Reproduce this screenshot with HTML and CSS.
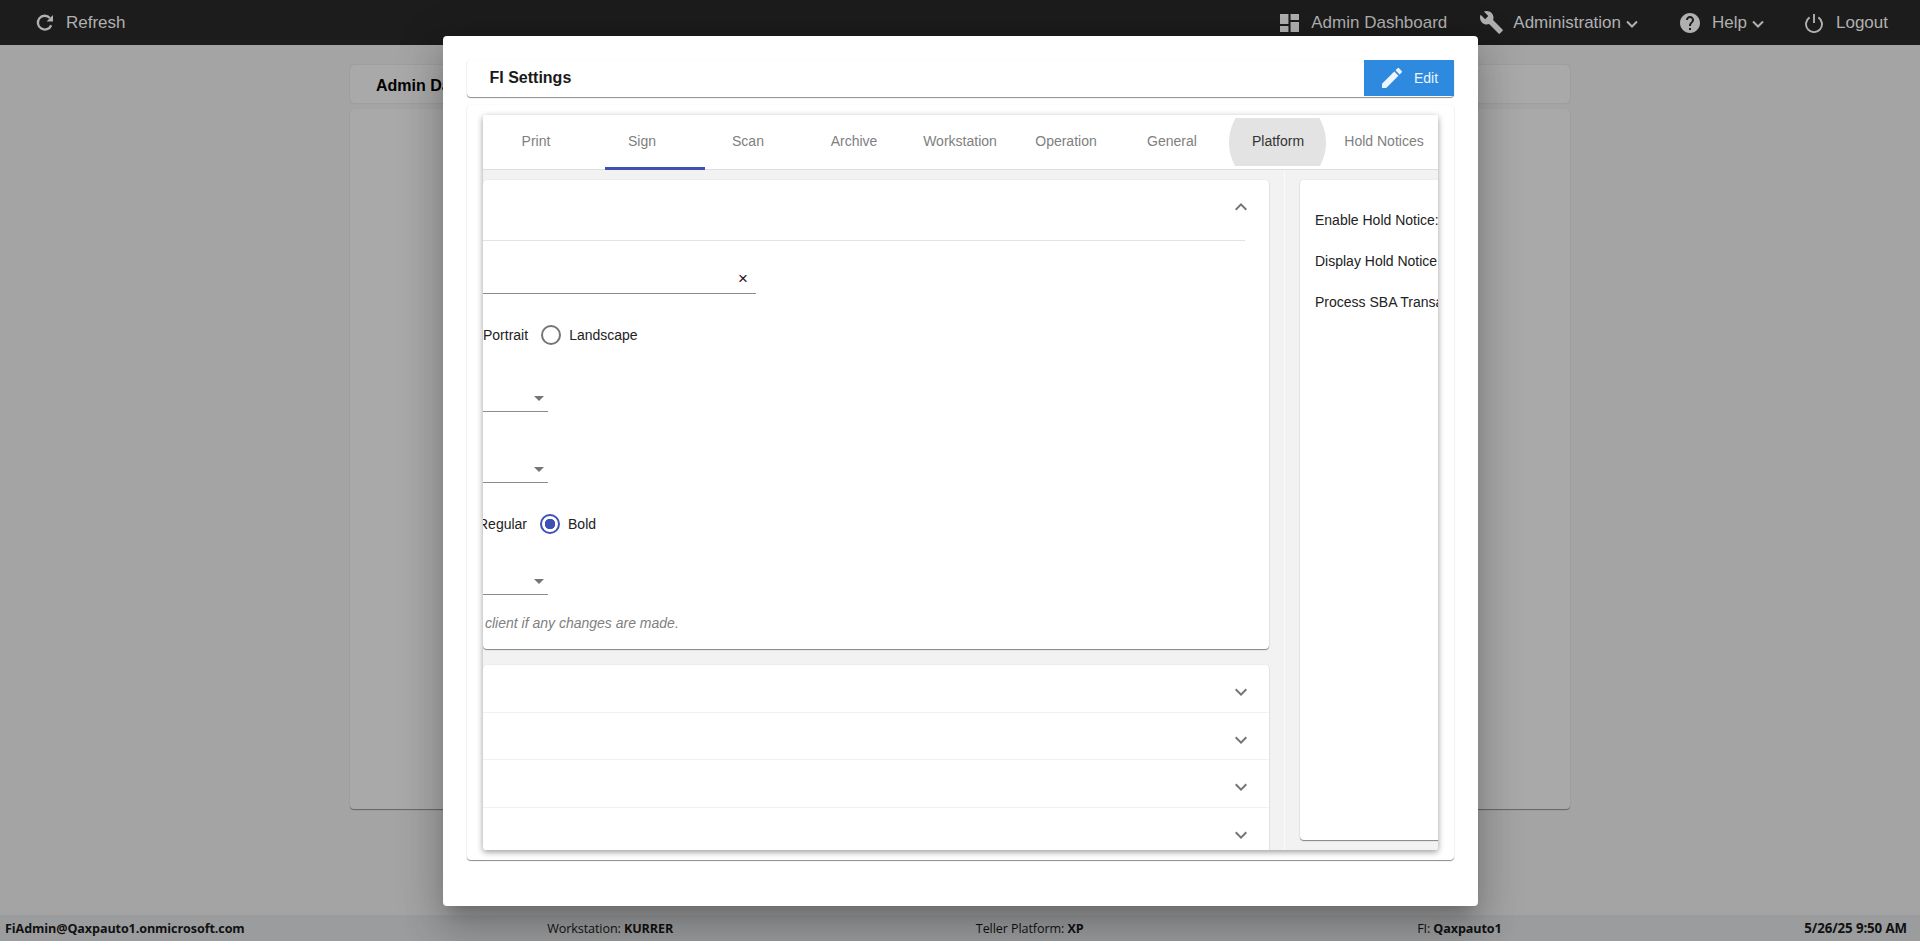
FILE: index.html
```html
<!DOCTYPE html>
<html lang="en">
<head>
    <meta charset="UTF-8">
    <meta name="viewport" content="width=device-width, initial-scale=1.0">
    <title>FI Settings</title>
    <link rel="stylesheet" href="styles.css">
</head>
<body>
    <div class="page">
        <header class="topbar">
            <a class="topbar__item topbar__item--refresh">
                <svg class="icon-refresh" viewBox="0 0 18 18"><path d="M15.2 11.2A6.9 6.9 0 1 1 13.9 4" fill="none" stroke="currentColor" stroke-width="2.3"/><path d="M17 1v6.4h-6.4z" fill="currentColor"/></svg>
                Refresh
            </a>
            <nav class="topbar__nav">
                <a class="topbar__item topbar__item--dash">
                    <svg class="icon-dash" viewBox="3 3 18 18" preserveAspectRatio="none"><path d="M3 13h8V3H3v10zm0 8h8v-6H3v6zm10 0h8V11h-8v10zm0-18v6h8V3h-8z" fill="currentColor"/></svg>
                    Admin Dashboard
                </a>
                <a class="topbar__item topbar__item--admin">
                    <svg class="icon-wrench" viewBox="1 1.2 22.2 22" ><path d="M22.7 19l-9.1-9.1c.9-2.3.4-5-1.5-6.9-2-2-5-2.4-7.4-1.3L9 6 6 9 1.6 4.7C.4 7.1.9 10.1 2.9 12.1c1.9 1.9 4.6 2.4 6.9 1.5l9.1 9.1c.4.4 1 .4 1.4 0l2.3-2.3c.5-.4.5-1.1.1-1.4z" fill="currentColor"/></svg>
                    Administration
                    <svg class="icon-caret" viewBox="0 0 12 8"><path d="M1 1.5l5 5 5-5" fill="none" stroke="currentColor" stroke-width="2"/></svg>
                </a>
                <a class="topbar__item topbar__item--help">
                    <svg class="icon-help" viewBox="2 2 20 20"><path d="M12 2C6.48 2 2 6.48 2 12s4.48 10 10 10 10-4.48 10-10S17.52 2 12 2zm1 17h-2v-2h2v2zm2.07-7.75l-.9.92C13.45 12.9 13 13.5 13 15h-2v-.5c0-1.1.45-2.1 1.17-2.83l1.24-1.26c.37-.36.59-.86.59-1.41 0-1.1-.9-2-2-2s-2 .9-2 2H8c0-2.21 1.79-4 4-4s4 1.79 4 4c0 .88-.36 1.68-.93 2.25z" fill="currentColor"/></svg>
                    Help
                    <svg class="icon-caret" viewBox="0 0 12 8"><path d="M1 1.5l5 5 5-5" fill="none" stroke="currentColor" stroke-width="2"/></svg>
                </a>
                <a class="topbar__item topbar__item--logout">
                    <svg class="icon-power" viewBox="0 0 20 20"><path d="M5.6 4.4a8 8 0 1 0 8.8 0M10 1v9" fill="none" stroke="currentColor" stroke-width="1.9"/></svg>
                    Logout
                </a>
            </nav>
        </header>

        <main class="content">
            <div class="back-tabs"><b>Admin Dashboard</b></div>
            <div class="back-card"></div>
        </main>

        <footer class="statusbar">
            <b>FiAdmin@Qaxpauto1.onmicrosoft.com</b>
            <span>Workstation: <b>KURRER</b></span>
            <span>Teller Platform: <b>XP</b></span>
            <span class="statusbar__fi">FI: <b>Qaxpauto1</b></span>
            <b class="statusbar__date">5/26/25 9:50 AM</b>
        </footer>
    </div>

    <div class="modal">
        <div class="modal__title">
            <h2>FI Settings</h2>
            <button class="edit-btn">
                <svg viewBox="3 3 18 18"><path d="M3 17.25V21h3.75L17.81 9.94l-3.75-3.75L3 17.25zM20.71 7.04c.39-.39.39-1.02 0-1.41l-2.34-2.34c-.39-.39-1.02-.39-1.41 0l-1.83 1.83 3.75 3.75 1.83-1.83z" fill="currentColor"/></svg>
                Edit
            </button>
        </div>
        <div class="modal__body">
            <div class="settings">
                <div class="tabs">
                    <div class="tab">Print</div>
                    <div class="tab">Sign</div>
                    <div class="tab">Scan</div>
                    <div class="tab">Archive</div>
                    <div class="tab">Workstation</div>
                    <div class="tab">Operation</div>
                    <div class="tab">General</div>
                    <div class="tab tab--hover"><span>Platform</span></div>
                    <div class="tab">Hold Notices</div>
                    <div class="tabs__ink"></div>
                </div>
                <div class="panels">
                    <div class="panel-left">
                        <section class="card">
                            <div class="card__header">
                                <svg class="chevron" viewBox="0 0 24 24"><path d="M12 8l-6 6 1.41 1.41L12 10.83l4.59 4.58L18 14z"/></svg>
                            </div>
                            <div class="form">
                                <div class="field field--input"><span class="field__clear">×</span></div>
                                <div class="radio-row">
                                    <span>Portrait</span>
                                    <span class="radio"></span>
                                    <span>Landscape</span>
                                </div>
                                <div class="field field--select field--gap-a"><span class="arrow"></span></div>
                                <div class="field field--select field--gap-b"><span class="arrow"></span></div>
                                <div class="radio-row radio-row--cut">
                                    <span>Regular</span>
                                    <span class="radio radio--on"></span>
                                    <span>Bold</span>
                                </div>
                                <div class="field field--select field--gap-c"><span class="arrow"></span></div>
                                <p class="form__note">client if any changes are made.</p>
                            </div>
                        </section>
                        <section class="card card--list">
                            <div class="list-row"><svg class="chevron" viewBox="0 0 24 24"><path d="M16.59 8.59L12 13.17 7.41 8.59 6 10l6 6 6-6z"/></svg></div>
                            <div class="list-row"><svg class="chevron" viewBox="0 0 24 24"><path d="M16.59 8.59L12 13.17 7.41 8.59 6 10l6 6 6-6z"/></svg></div>
                            <div class="list-row"><svg class="chevron" viewBox="0 0 24 24"><path d="M16.59 8.59L12 13.17 7.41 8.59 6 10l6 6 6-6z"/></svg></div>
                            <div class="list-row"><svg class="chevron" viewBox="0 0 24 24"><path d="M16.59 8.59L12 13.17 7.41 8.59 6 10l6 6 6-6z"/></svg></div>
                        </section>
                    </div>
                    <div class="panel-right">
                        <section class="card card--notices">
                            <div class="notice-row">Enable Hold Notice:</div>
                            <div class="notice-row">Display Hold Notice</div>
                            <div class="notice-row">Process SBA Transactions</div>
                        </section>
                    </div>
                </div>
            </div>
        </div>
    </div>
</body>
</html>
```

FILE: styles.css
```css
* {
    box-sizing: border-box;
}

body {
    margin: 0;
    font-family: "Liberation Sans", Arial, sans-serif;
    font-size: 14px;
    background-color: #a4a4a4;
    overflow: hidden;
}

.page {
    height: 100vh;
    display: flex;
    flex-direction: column;
}

/* top bar */
.topbar {
    height: 45px;
    flex: none;
    display: flex;
    align-items: center;
    justify-content: space-between;
    background-color: #1c1c1c;
    color: #b0b0b0;
    font-size: 17px;
    padding: 0 32px 0 36px;
}

.topbar__nav {
    display: flex;
    align-items: center;
}

.topbar__item {
    display: flex;
    align-items: center;
}

.topbar__item--admin {
    margin-left: 33px;
}

.topbar__item--help {
    margin-left: 42px;
}

.topbar__item--logout {
    margin-left: 40px;
}

.icon-refresh {
    width: 18px;
    height: 18px;
    margin-right: 12px;
}

.icon-dash {
    width: 19px;
    height: 18px;
    margin-right: 12px;
}

.icon-wrench {
    width: 23px;
    height: 23px;
    margin-right: 10px;
}

.icon-help {
    width: 20px;
    height: 20px;
    margin-right: 12px;
}

.icon-power {
    width: 20px;
    height: 20px;
    margin-right: 12px;
}

.icon-caret {
    width: 12px;
    height: 8px;
    margin-left: 5px;
    margin-top: 2px;
}

/* page behind the modal */
.content {
    flex: 1;
    width: 1220px;
    margin: 0 auto;
    padding-top: 20px;
}

.back-tabs {
    height: 38px;
    padding: 12px 26px 0;
    font-size: 16px;
    color: #000;
    background-color: #a9a9a9;
    border-radius: 4px;
    box-shadow: 0 0 1px rgba(0, 0, 0, 0.35);
}

.back-card {
    height: 700px;
    margin-top: 6px;
    background-color: #a9a9a9;
    border-radius: 4px;
    box-shadow: 0 1px 1px rgba(0, 0, 0, 0.4);
}

.statusbar {
    height: 26px;
    flex: none;
    display: flex;
    align-items: center;
    justify-content: space-between;
    padding: 0 13px 0 5px;
    background-color: #9b9c9d;
    color: #111;
    font-family: "Open Sans", sans-serif;
    font-size: 12.6px;
    letter-spacing: -0.1px;
}

.statusbar__fi {
    margin-left: 31px;
}

.statusbar__date {
    font-size: 13.3px;
}

/* modal */
.modal {
    position: absolute;
    left: 443px;
    top: 36px;
    width: 1035px;
    height: 870px;
    padding: 24px 24px 0;
    background-color: #fff;
    border-radius: 4px;
    box-shadow: 0 11px 15px -7px rgba(0, 0, 0, 0.2), 0 24px 38px 3px rgba(0, 0, 0, 0.14), 0 9px 46px 8px rgba(0, 0, 0, 0.12);
}

.modal__title {
    height: 37px;
    display: flex;
    align-items: flex-start;
    justify-content: space-between;
    border-radius: 4px;
    box-shadow: 0 1px 1px rgba(0, 0, 0, 0.45), 0 0 2px rgba(0, 0, 0, 0.06);
}

.modal__title h2 {
    margin: 9px 0 0 22.5px;
    font-size: 16px;
    line-height: 18px;
    color: #1a1a1a;
}

.edit-btn {
    width: 90px;
    height: 36px;
    display: flex;
    align-items: center;
    padding: 0 0 0 18px;
    border: 0;
    background-color: #2e8ade;
    color: #eef5fc;
    font-family: inherit;
    font-size: 14px;
}

.edit-btn svg {
    width: 20px;
    height: 20px;
    margin-right: 12px;
}

.modal__body {
    height: 755px;
    margin-top: 8px;
    padding: 10px 16px;
    border-radius: 4px;
    box-shadow: 0 1px 1px rgba(0, 0, 0, 0.45), 0 0 2px rgba(0, 0, 0, 0.06);
}

.settings {
    height: 735px;
    overflow: hidden;
    display: flex;
    flex-direction: column;
    background-color: #f2f2f2;
    border-radius: 2px;
    box-shadow: 0 2px 6px rgba(0, 0, 0, 0.4);
}

/* tabs */
.tabs {
    position: relative;
    flex: none;
    height: 55px;
    display: flex;
    padding: 3px 1px 0 0;
    background-color: #fff;
    border-bottom: 1px solid #dedede;
}

.tab {
    position: relative;
    overflow: hidden;
    flex: 1;
    height: 48px;
    padding-bottom: 2px;
    display: flex;
    align-items: center;
    justify-content: center;
    color: #808080;
}

.tab--hover {
    color: #333;
}

.tab--hover::before {
    content: "";
    position: absolute;
    left: 4px;
    top: -24px;
    width: 97px;
    height: 97px;
    border-radius: 50%;
    background-color: #e3e3e3;
}

.tab--hover span {
    position: relative;
}

.tabs__ink {
    position: absolute;
    left: 122px;
    bottom: -1px;
    width: 100px;
    height: 3px;
    background-color: #3f51b5;
}

/* panels */
.panels {
    flex: 1;
    min-height: 0;
    display: flex;
}

.panel-left {
    flex: none;
    width: 802px;
    padding: 10px 15px 0 0;
    border-right: 1px solid #fafafa;
}

.panel-right {
    flex: none;
    width: 300px;
    padding: 10px 0 10px 15px;
}

.card {
    background-color: #fff;
    border-radius: 4px;
    box-shadow: 0 1px 1px rgba(0, 0, 0, 0.45), 0 0 2px rgba(0, 0, 0, 0.08);
}

.card__header {
    height: 61px;
    margin-right: 24px;
    padding-top: 15px;
    display: flex;
    justify-content: flex-end;
    border-bottom: 1px solid #e2e2e2;
}

.chevron {
    width: 24px;
    height: 24px;
    fill: #757575;
    margin-right: -8px;
}

.form {
    padding: 28px 0 18px;
}

.field {
    height: 25px;
    display: flex;
    align-items: center;
    justify-content: flex-end;
    border-bottom: 1px solid #8c8c8c;
}

.field--input {
    width: 273px;
    padding: 0 8px 5px 0;
}

.field__clear {
    font-size: 17px;
    line-height: 1;
    color: #301020;
}

.field--select {
    width: 65px;
    padding: 0 4px 2px 0;
}

.field--gap-a {
    margin-top: 42px;
}

.field--gap-b {
    margin-top: 46px;
}

.field--gap-c {
    margin-top: 36px;
}

.arrow {
    width: 0;
    height: 0;
    border-left: 5px solid transparent;
    border-right: 5px solid transparent;
    border-top: 5px solid #757575;
}

.radio-row {
    height: 20px;
    margin-top: 31px;
    display: flex;
    align-items: center;
    gap: 11px;
    color: #222;
}

.radio-row span:first-child {
    margin-right: 2px;
}

.radio-row--cut {
    margin-left: -5px;
}

.radio {
    width: 20px;
    height: 20px;
    margin-right: -3px;
    border: 2px solid #757575;
    border-radius: 50%;
}

.radio--on {
    border-color: #3f51b5;
    background: radial-gradient(circle, #3f51b5 5px, transparent 5.5px);
}

.form__note {
    height: 16px;
    margin: 20px 0 0 2px;
    line-height: 16px;
    font-style: italic;
    color: #808080;
}

.card--list {
    margin-top: 16px;
    height: 192px;
}

.list-row {
    height: 47.7px;
    padding: 15px 24px 0 0;
    display: flex;
    justify-content: flex-end;
    border-bottom: 1px solid #f2f2f2;
}

.card--notices {
    height: 100%;
    padding: 20px 15px;
    color: #222;
    white-space: nowrap;
}

.notice-row {
    height: 41px;
    line-height: 41px;
}
```
